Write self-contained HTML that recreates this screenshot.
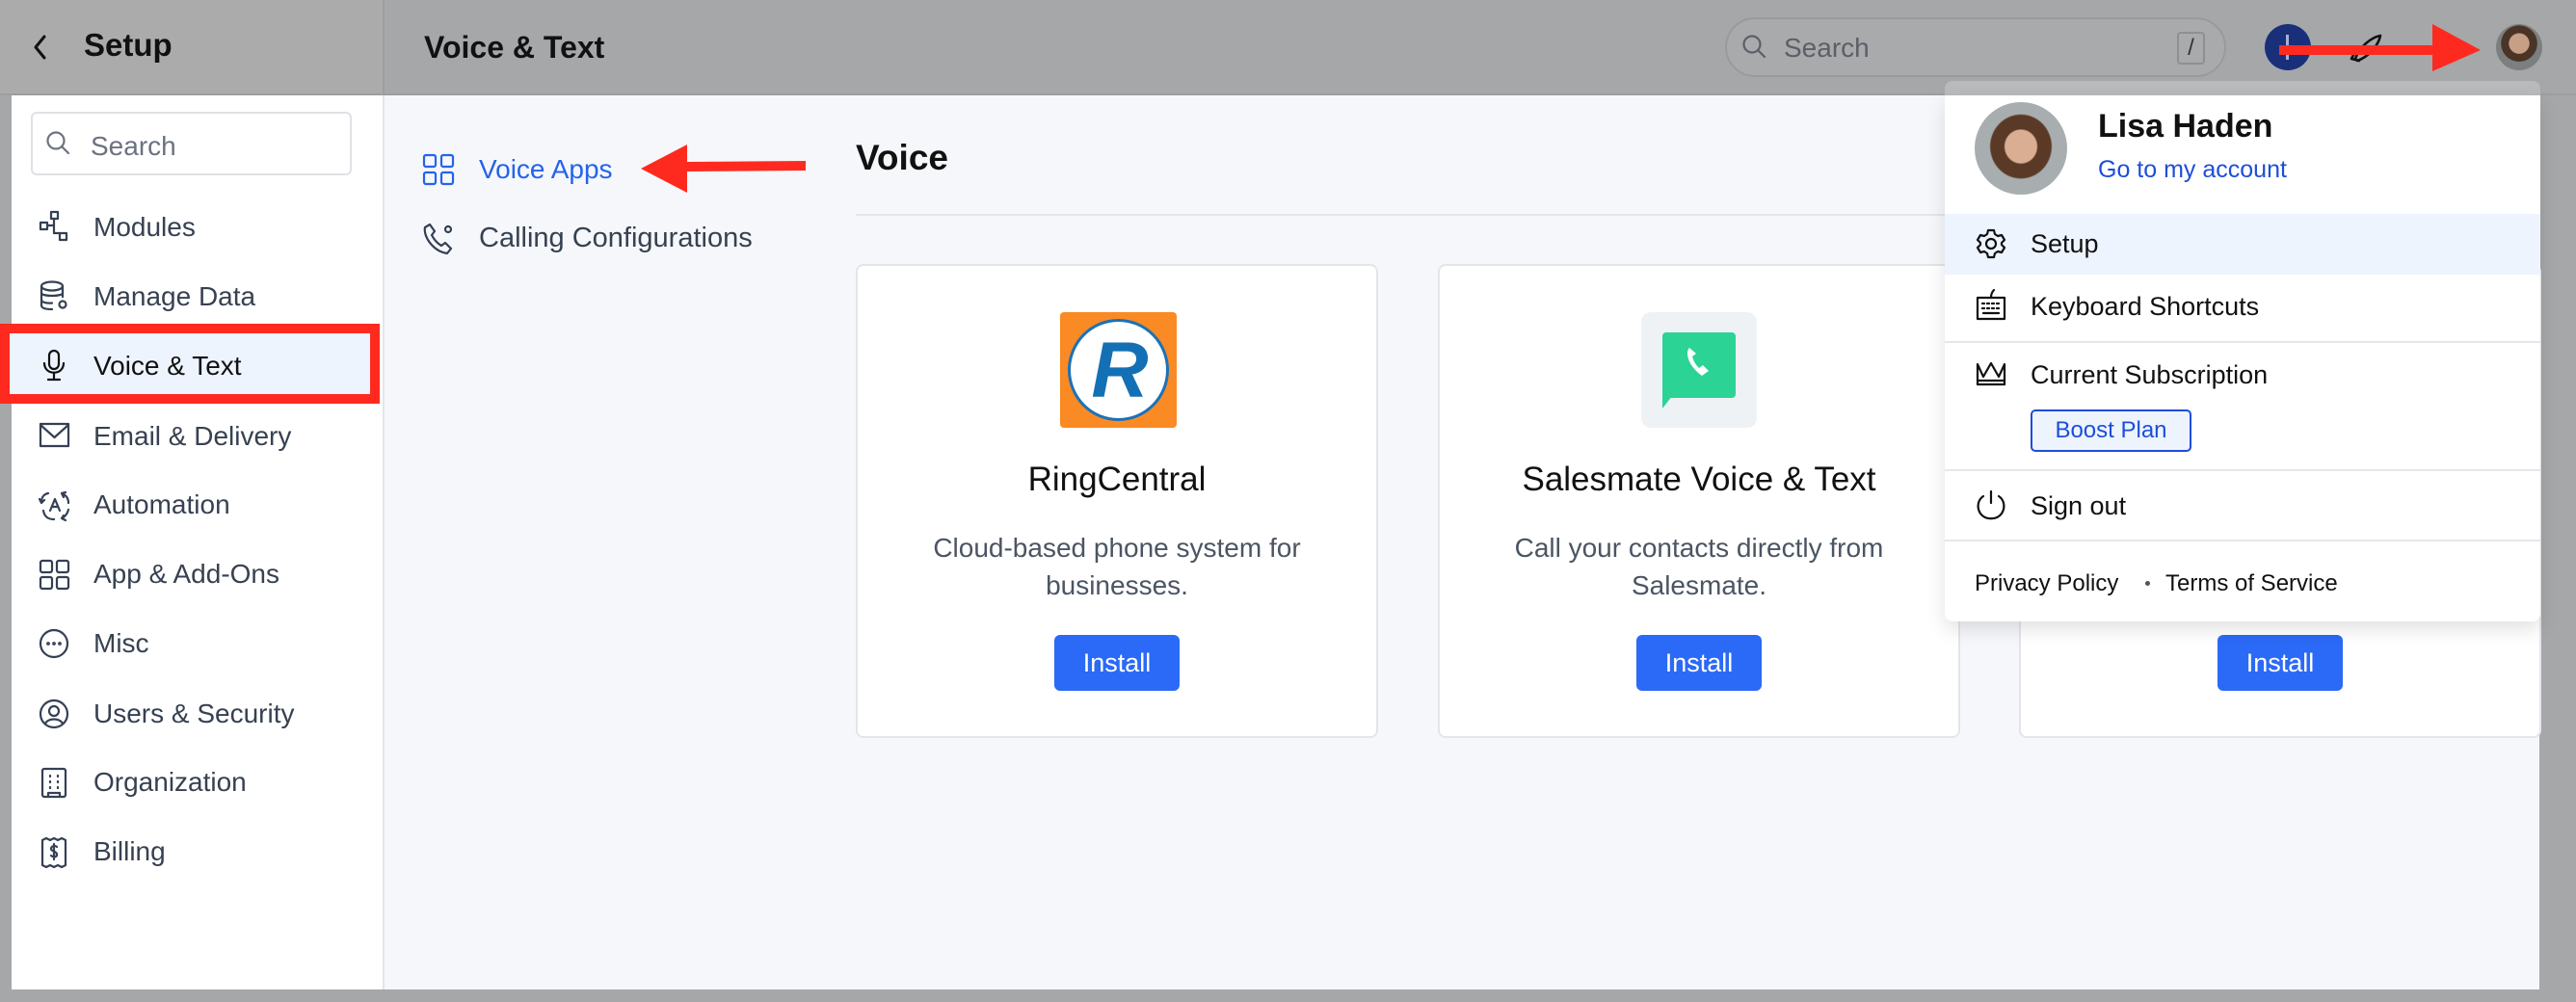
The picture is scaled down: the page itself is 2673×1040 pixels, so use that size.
<!DOCTYPE html>
<html><head><meta charset="utf-8"><style>
*{margin:0;padding:0;box-sizing:border-box}
body{width:2673px;height:1040px;overflow:hidden;background:#a6a7a9;font-family:"Liberation Sans",sans-serif;position:relative;color:#1f2937}
.a{position:absolute}
.t{position:absolute;white-space:nowrap}
.ic{position:absolute;fill:none;stroke:#344054;stroke-width:2.2;stroke-linecap:round;stroke-linejoin:round}
.mi{font-size:28px;color:#374151;left:97px}
.card{position:absolute;top:274px;height:492px;background:#fff;border:2px solid #e3e5ea;border-radius:8px}
.ct{position:absolute;width:100%;text-align:center;top:202px;font-size:35px;color:#111}
.cd{position:absolute;width:100%;text-align:center;top:273px;font-size:28px;line-height:39px;color:#4b5563}
.btn{position:absolute;left:50%;transform:translateX(-50%);top:383px;width:130px;height:58px;background:#2b6af6;border-radius:6px;color:#fff;font-size:27px;text-align:center;line-height:58px}
.dd{font-size:27px;color:#111;left:2107px}
.hr{position:absolute;left:2018px;width:618px;height:2px;background:#e5e7eb}
</style></head><body>
<!-- header -->
<div class="a" style="left:0;top:0;width:397px;height:99px;background:#ababab"></div>
<div class="a" style="left:397px;top:0;width:2276px;height:99px;background:#a6a7a9;border-left:2px solid #9c9d9f"></div>
<div class="a" style="left:0;top:97px;width:2673px;height:2px;background:#9d9ea0"></div>
<svg class="ic" style="left:30px;top:34px;stroke:#111;stroke-width:3" width="24" height="30"><path d="M16 4 L7 15 L16 26"/></svg>
<div class="t" style="left:87px;top:28px;font-size:33px;font-weight:bold;color:#111">Setup</div>
<div class="t" style="left:440px;top:31px;font-size:32px;font-weight:bold;color:#111">Voice &amp; Text</div>
<div class="a" style="left:1790px;top:18px;width:520px;height:62px;border:2px solid #999a9c;border-radius:31px;background:#a9aaac"></div>
<svg class="ic" style="left:1806px;top:34px;stroke:#5b5f66" width="30" height="30"><circle cx="12" cy="12" r="8.5"/><path d="M18 18 L25 25"/></svg>
<div class="t" style="left:1851px;top:34px;font-size:28px;color:#5b5f66">Search</div>
<div class="a" style="left:2259px;top:33px;width:29px;height:34px;border:2px solid #8d8f93;border-radius:4px;color:#333;font-size:24px;text-align:center;line-height:30px">/</div>
<div class="a" style="left:2350px;top:25px;width:48px;height:48px;border-radius:50%;background:#1a2f7a"></div>
<div class="a" style="left:2372px;top:36px;width:3px;height:26px;background:#a8b0d0"></div>
<svg class="ic" style="left:2438px;top:33px;stroke:#111;stroke-width:2.6" width="36" height="34"><path d="M6 28 C10 16 22 6 32 4 C30 14 20 26 8 30 Z M6 20 L2 28 L10 30"/></svg>
<svg class="a" style="left:2360px;top:24px" width="220" height="52"><path d="M5 23 L164 23 L164 1 L214 28 L164 50 L164 33 L5 33 Z" fill="#ff2a1f"/></svg>
<div class="a" style="left:2590px;top:25px;width:48px;height:48px;border-radius:50%;background:radial-gradient(circle at 50% 42%,#c79f87 0 28%,#4a3426 30% 50%,#7b7f80 52%)"></div>
<!-- sidebar -->
<div class="a" style="left:12px;top:99px;width:385px;height:928px;background:#fff"></div>
<div class="a" style="left:32px;top:116px;width:333px;height:66px;border:2px solid #dfe1e6;border-radius:6px"></div>
<svg class="ic" style="left:46px;top:134px;stroke:#6b7280" width="30" height="30"><circle cx="12" cy="12" r="8.5"/><path d="M18 18 L25 25"/></svg>
<div class="t" style="left:94px;top:136px;font-size:28px;color:#6b7280">Search</div>
<div class="a" style="left:0;top:336px;width:394px;height:83px;border:10px solid #ff2a1f;background:#eef4fe"></div>

<svg class="ic" style="left:40px;top:218px" width="34" height="34"><rect x="13" y="2" width="7" height="7"/><rect x="2" y="13" width="7" height="7"/><rect x="22" y="24" width="7" height="7"/><path d="M9 16 H16 V9 M16 16 V24 H22"/></svg>
<div class="t mi" style="top:220px">Modules</div>
<svg class="ic" style="left:40px;top:290px" width="34" height="34"><ellipse cx="14" cy="7" rx="11" ry="4.5"/><path d="M3 7 V27 C3 30 8 31 14 31 M25 7 V18 M3 14 C3 18 25 18 25 14 M3 21 C3 24 9 25 14 24.5"/><circle cx="25" cy="26" r="3.5"/></svg>
<div class="t mi" style="top:292px">Manage Data</div>
<svg class="ic" style="left:40px;top:362px;stroke:#111" width="34" height="36"><rect x="11" y="2" width="10" height="19" rx="5"/><path d="M6 15 C6 28 26 28 26 15 M16 26 V32 M10 32 H22"/></svg>
<div class="t mi" style="top:364px;color:#111">Voice &amp; Text</div>
<svg class="ic" style="left:40px;top:437px" width="34" height="30"><rect x="2" y="3" width="29" height="23"/><path d="M2 4 L16.5 17 L31 4"/></svg>
<div class="t mi" style="top:437px">Email &amp; Delivery</div>
<svg class="ic" style="left:40px;top:508px" width="34" height="34"><path d="M10 4 C5 5 3 9 3 13 M1 10 L3 14 L6 11 M24 4 C29 6 31 10 31 14 M28 3 L24 4 L26 8 M5 22 C6 28 10 31 16 31 M24 30 C28 28 30 25 31 21 M28 32 L24 30 L26 27 M12 22 L17 10 L22 22 M14 18 H20"/></svg>
<div class="t mi" style="top:508px">Automation</div>
<svg class="ic" style="left:40px;top:580px" width="34" height="34"><rect x="2" y="2" width="12" height="12" rx="2"/><rect x="19" y="2" width="12" height="12" rx="2"/><rect x="2" y="19" width="12" height="12" rx="2"/><rect x="19" y="19" width="12" height="12" rx="2"/></svg>
<div class="t mi" style="top:580px">App &amp; Add-Ons</div>
<svg class="ic" style="left:40px;top:652px" width="34" height="34"><circle cx="16" cy="16" r="14"/><circle cx="10" cy="16" r=".8"/><circle cx="16" cy="16" r=".8"/><circle cx="22" cy="16" r=".8"/></svg>
<div class="t mi" style="top:652px">Misc</div>
<svg class="ic" style="left:40px;top:725px" width="34" height="34"><circle cx="16" cy="16" r="14"/><circle cx="16" cy="13" r="5"/><path d="M7 26 C10 20 22 20 25 26"/></svg>
<div class="t mi" style="top:725px">Users &amp; Security</div>
<svg class="ic" style="left:40px;top:796px" width="34" height="34"><rect x="4" y="2" width="24" height="29" rx="2"/><path d="M12 9v1M20 9v1M12 15v1M20 15v1M12 21v1M20 21v1M10 31 V27 H22 V31"/></svg>
<div class="t mi" style="top:796px">Organization</div>
<svg class="ic" style="left:40px;top:868px" width="34" height="34"><path d="M4 4 L8 2 L12 4 L16 2 L20 4 L24 2 L28 4 V30 L24 32 L20 30 L16 32 L12 30 L8 32 L4 30 Z M19 11 C17 9 13 10 13 13 C13 16 19 15 19 19 C19 22 15 22 13 20 M16 8 V24"/></svg>
<div class="t mi" style="top:868px">Billing</div>
<!-- main -->
<div class="a" style="left:397px;top:99px;width:2238px;height:928px;background:#f6f7fb;border-left:2px solid #e3e5ea"></div>
<svg class="ic" style="left:438px;top:159px;stroke:#2563eb" width="36" height="36"><rect x="2" y="2" width="12" height="12" rx="2"/><rect x="20" y="2" width="12" height="12" rx="2"/><rect x="2" y="20" width="12" height="12" rx="2"/><rect x="20" y="20" width="12" height="12" rx="2"/></svg>
<div class="t" style="left:497px;top:160px;font-size:28px;color:#2563eb">Voice Apps</div>
<svg class="ic" style="left:438px;top:230px" width="36" height="36"><path d="M8 3 L3 6 C1 16 12 31 26 33 L30 28 L24 22 L20 25 C15 22 12 18 10 14 L13 10 Z"/><circle cx="27" cy="8" r="3"/></svg>
<div class="t" style="left:497px;top:231px;font-size:29px;color:#374151">Calling Configurations</div>
<svg class="a" style="left:660px;top:148px" width="180" height="55"><path d="M5 27 L53 2 L53 20 L176 19 L176 29 L53 30 L53 52 Z" fill="#ff2a1f"/></svg>
<div class="t" style="left:888px;top:143px;font-size:37px;font-weight:bold;color:#111">Voice</div>
<div class="a" style="left:888px;top:222px;width:1747px;height:2px;background:#e3e5ea"></div>
<div class="card" style="left:888px;width:542px">
 <div class="a" style="left:210px;top:48px;width:121px;height:120px;background:#fa8a24;border-radius:4px"></div>
 <div class="a" style="left:218px;top:55px;width:105px;height:106px;border-radius:50%;background:#fff;border:3px solid #1a72b8"></div>
 <div class="t" style="left:232px;top:62px;font-size:82px;font-weight:bold;font-style:italic;color:#1470b4;width:80px;text-align:center">R</div>
 <div class="ct">RingCentral</div>
 <div class="cd">Cloud-based phone system for<br>businesses.</div>
 <div class="btn">Install</div>
</div>
<div class="card" style="left:1492px;width:542px">
 <div class="a" style="left:209px;top:48px;width:120px;height:120px;background:#eff2f5;border-radius:10px"></div>
 <div class="a" style="left:231px;top:69px;width:76px;height:68px;background:#2bd394;border-radius:4px"></div>
 <svg class="a" style="left:231px;top:130px" width="20" height="22"><path d="M0 0 H14 L0 18 Z" fill="#2bd394"/></svg>
 <svg class="a" style="left:252px;top:82px" width="36" height="40"><path d="M7 3 C2 8 6 22 20 32 L27 27 L21 21 L17 24 C13 20 11 16 10 12 L14 9 Z" fill="#fff"/></svg>
 <div class="ct">Salesmate Voice &amp; Text</div>
 <div class="cd">Call your contacts directly from<br>Salesmate.</div>
 <div class="btn">Install</div>
</div>
<div class="card" style="left:2095px;width:542px">
 <div class="btn">Install</div>
</div>
<!-- dropdown -->
<div class="a" style="left:2018px;top:84px;width:618px;height:16px;background:#b9babc;border-radius:8px 8px 0 0"></div>
<div class="a" style="left:2018px;top:99px;width:618px;height:546px;background:#fff;border-radius:0 0 8px 8px;box-shadow:0 8px 20px rgba(0,0,0,.12)"></div>
<div class="a" style="left:2049px;top:106px;width:96px;height:96px;border-radius:50%;background:radial-gradient(ellipse at 50% 48%,#d9ae92 0 24%,#5a3a26 26% 46%,#a8adb0 48%)"></div>
<div class="t" style="left:2177px;top:112px;font-size:34px;font-weight:bold;color:#111">Lisa Haden</div>
<div class="t" style="left:2177px;top:162px;font-size:25px;color:#1d4ed8">Go to my account</div>
<div class="a" style="left:2018px;top:222px;width:618px;height:63px;background:#eef4fe"></div>
<svg class="ic" style="left:2049px;top:236px;stroke:#111" width="34" height="34"><circle cx="17" cy="17" r="5"/><path d="M14 3h6l1 4 3 2 4-1 3 5-3 3v2l3 3-3 5-4-1-3 2-1 4h-6l-1-4-3-2-4 1-3-5 3-3v-2l-3-3 3-5 4 1 3-2z"/></svg>
<div class="t dd" style="top:238px">Setup</div>
<svg class="ic" style="left:2049px;top:299px;stroke:#111" width="34" height="36"><rect x="3" y="10" width="28" height="22"/><path d="M17 10 C17 6 18 4 20 2 M8 16h2M13 16h2M18 16h2M23 16h2M8 21h2M13 21h2M18 21h2M23 21h2M9 26h16"/></svg>
<div class="t dd" style="top:303px">Keyboard Shortcuts</div>
<div class="hr" style="top:354px"></div>
<svg class="ic" style="left:2049px;top:373px;stroke:#111" width="34" height="34"><path d="M3 5 L9 18 L17 4 L25 18 L31 5 V26 H3 Z M3 22 H31"/></svg>
<div class="t dd" style="top:374px">Current Subscription</div>
<div class="a" style="left:2107px;top:425px;width:167px;height:44px;border:2px solid #1d4ed8;border-radius:5px;background:#eef4fe;color:#1d4ed8;font-size:24px;text-align:center;line-height:40px">Boost Plan</div>
<div class="hr" style="top:487px"></div>
<svg class="ic" style="left:2049px;top:507px;stroke:#111" width="34" height="36"><path d="M17 3 V15 M9 8 C3 12 2 20 6 26 C11 33 23 33 28 26 C32 20 31 12 25 8"/></svg>
<div class="t dd" style="top:510px">Sign out</div>
<div class="hr" style="top:560px"></div>
<div class="t" style="left:2049px;top:592px;font-size:24px;color:#111">Privacy Policy</div>
<div class="a" style="left:2226px;top:603px;width:5px;height:5px;border-radius:50%;background:#555"></div>
<div class="t" style="left:2247px;top:592px;font-size:24px;color:#111">Terms of Service</div>
</body></html>
